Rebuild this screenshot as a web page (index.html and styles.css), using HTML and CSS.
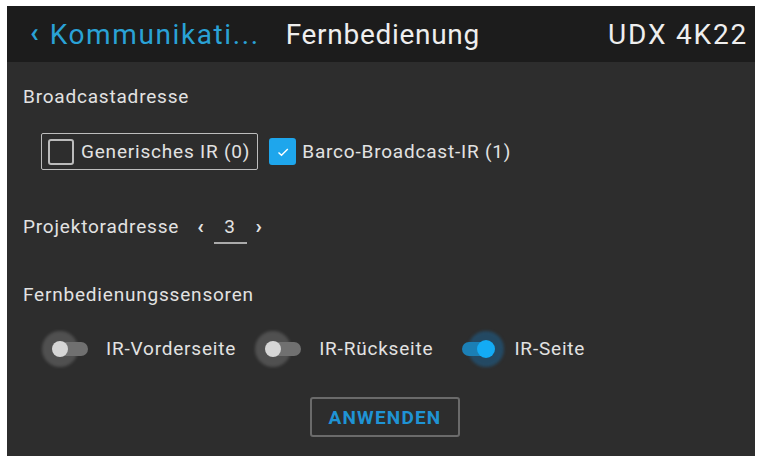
FILE: index.html
```html
<!DOCTYPE html>
<html lang="de">
<head>
<meta charset="utf-8">
<title>Fernbedienung</title>
<link rel="stylesheet" href="styles.css">
</head>
<body>
<div class="screen">
  <header class="topbar">
    <div class="back"><span class="chev">‹</span><span class="back-label">Kommunikati...</span></div>
    <div class="title">Fernbedienung</div>
    <div class="device">UDX 4K22</div>
  </header>
  <main class="content">
    <section class="group first">
      <div class="label">Broadcastadresse</div>
      <div class="checks">
        <label class="check focused"><span class="box"></span><span>Generisches IR (0)</span></label>
        <label class="check"><span class="box on"><svg viewBox="0 0 16 16" width="16" height="16"><path d="M3.5 8.5l3 2.8L12.8 5" fill="none" stroke="#fff" stroke-width="1.4"/></svg></span><span>Barco-Broadcast-IR (1)</span></label>
      </div>
    </section>
    <section class="row address">
      <div class="label">Projektoradresse</div>
      <div class="stepper"><span class="arr">‹</span><span class="val">3</span><span class="arr">›</span></div>
    </section>
    <section class="group sensors">
      <div class="label">Fernbedienungssensoren</div>
      <div class="toggles">
        <div class="toggle"><span class="switch"><span class="track"></span><span class="thumb"></span></span><span>IR-Vorderseite</span></div>
        <div class="toggle"><span class="switch"><span class="track"></span><span class="thumb"></span></span><span>IR-Rückseite</span></div>
        <div class="toggle"><span class="switch on"><span class="track"></span><span class="thumb"></span></span><span>IR-Seite</span></div>
      </div>
    </section>
    <div class="actions"><button class="apply">ANWENDEN</button></div>
  </main>
</div>
</body>
</html>
```
FILE: styles.css
```css
html, body {
  margin: 0;
  padding: 0;
  background: #fff;
}
body {
  font-family: Roboto, "Liberation Sans", sans-serif;
  color: #e2e2e2;
}
.screen {
  margin: 6px 4px 0 7px;
  height: 450px;
  background: #2d2d2d;
  display: flex;
  flex-direction: column;
  overflow: hidden;
}

/* top bar */
.topbar {
  height: 56px;
  flex: none;
  background: #1c1c1c;
  display: flex;
  align-items: center;
  padding: 0 7px 0 23px;
  font-size: 28px;
  letter-spacing: 1px;
}
.back {
  display: flex;
  align-items: center;
  color: #2aa2d6;
}
.chev {
  font-size: 28px;
  font-weight: 700;
  margin-right: 10px;
  position: relative;
  top: -2px;
}
.back-label {
  letter-spacing: 1.6px;
}
.title {
  margin-left: 26px;
  color: #eee;
  letter-spacing: 0.7px;
}
.device {
  margin-left: auto;
  color: #eee;
  letter-spacing: 1.8px;
}

/* content */
.content {
  padding: 0 0 0 16px;
  font-size: 19px;
  letter-spacing: 0.8px;
  line-height: 22px;
}
.first .label {
  margin-top: 24px;
}
.checks {
  display: flex;
  align-items: center;
  margin: 25px 0 0 18px;
  gap: 4px;
}
.check {
  display: flex;
  align-items: center;
  gap: 7px;
  height: 35px;
  padding: 0 7px 0 6px;
  border: 1px solid transparent;
  border-radius: 2px;
}
.check.focused {
  border-color: #bdbdbd;
}
.box {
  width: 26px;
  height: 26px;
  border: 2px solid #bbb;
  border-radius: 3px;
  box-sizing: border-box;
  display: flex;
  align-items: center;
  justify-content: center;
}
.box.on {
  background: #1ea6ec;
  border-color: #1ea6ec;
  width: 27px;
  height: 27px;
  margin-right: -1px;
}

/* address stepper */
.address {
  display: flex;
  align-items: center;
  margin-top: 46px;
}
.stepper {
  display: flex;
  align-items: center;
  margin-left: 18px;
}
.arr {
  font-size: 21px;
  font-weight: 700;
  position: relative;
  top: -1px;
}
.val {
  width: 33px;
  text-align: center;
  margin: 0 9px;
  padding-bottom: 4px;
  margin-bottom: -6px;
  border-bottom: 2px solid #aaa;
  font-size: 19px;
}

/* sensor toggles */
.sensors {
  margin-top: 46px;
}
.toggles {
  display: flex;
  align-items: center;
  margin: 25px 0 0 19px;
  gap: 19px;
}
.toggle {
  display: flex;
  align-items: center;
  gap: 18px;
}
.switch {
  position: relative;
  width: 46px;
  height: 36px;
  flex: none;
}
.switch::before {
  content: "";
  position: absolute;
  left: 0;
  top: 0;
  width: 36px;
  height: 36px;
  border-radius: 50%;
  background: rgba(255, 255, 255, 0.17);
  filter: blur(1.5px);
}
.track {
  position: absolute;
  left: 12px;
  top: 11px;
  width: 34px;
  height: 14px;
  border-radius: 7px;
  background: #707070;
}
.thumb {
  position: absolute;
  left: 10px;
  top: 10px;
  width: 16px;
  height: 16px;
  border-radius: 50%;
  background: #d6d6d6;
}
.switch.on::before {
  left: 16px;
  background: rgba(20, 120, 190, 0.38);
}
.switch.on .track {
  left: 10px;
  width: 30px;
  background: #1b7fb5;
}
.switch.on .thumb {
  left: 25px;
  width: 18px;
  height: 18px;
  top: 9px;
  background: #13abf5;
}
.toggle:last-child {
  gap: 16px;
}

/* apply button */
.actions {
  display: flex;
  justify-content: center;
  margin-top: 30px;
  padding-right: 8px;
}
.apply {
  width: 150px;
  height: 40px;
  background: transparent;
  border: 2px solid #6a6a6a;
  border-radius: 3px;
  color: #1f93d4;
  font-family: Roboto, "Liberation Sans", sans-serif;
  font-weight: 700;
  font-size: 19px;
  letter-spacing: 1.2px;
  padding: 0;
}
```
